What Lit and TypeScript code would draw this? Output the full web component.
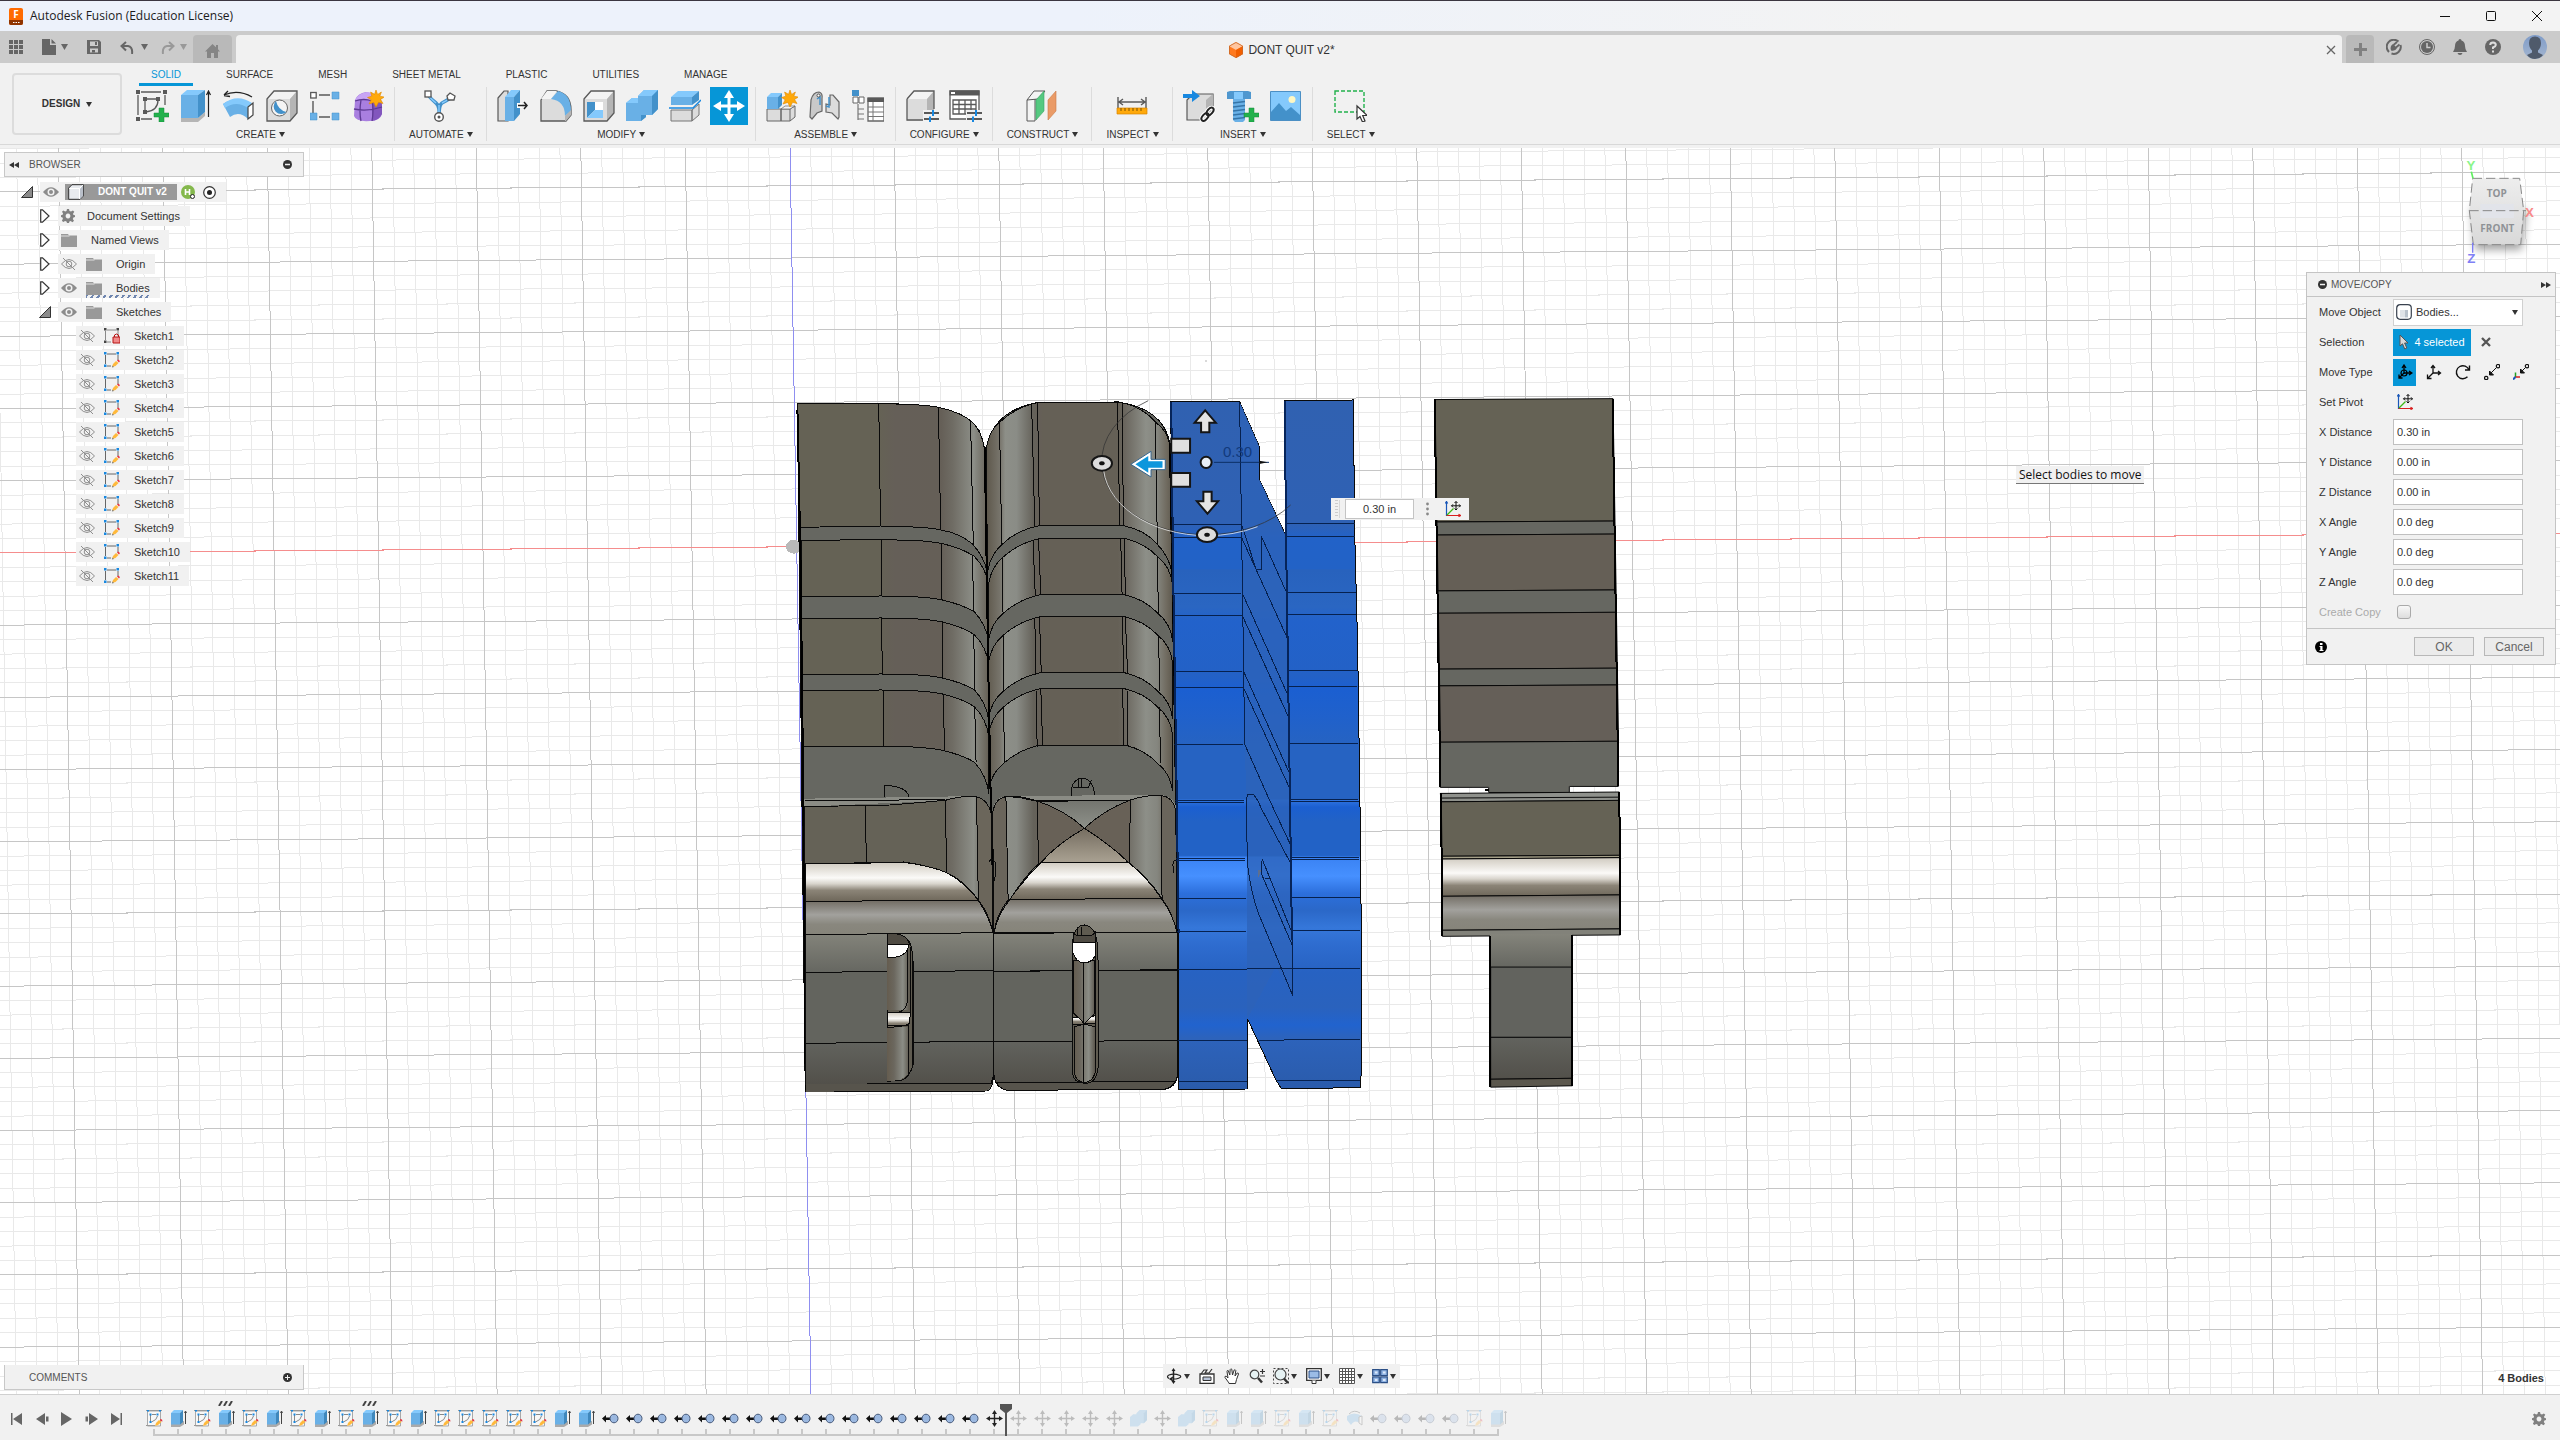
import { LitElement, html, svg, css, nothing, TemplateResult, SVGTemplateResult } from "lit";
import { customElement } from "lit/decorators.js";

type Art = [string, SVGTemplateResult];

const cubeGrey = svg`<path d="M1 9L8 1H31V23L23 31H1Z" fill="#dcdcdc"/><path d="M1 9L8 1H31L24 9Z" fill="#f3f3f3"/><path d="M31 1V23L24 31V9Z" fill="#b5b5b5"/><path d="M1 9L8 1H31V23L24 31H1Z" fill="none" stroke="#595959" stroke-width="1.3"/>`;
const plus = svg`<path d="M23 18h5v5h5v4h-5v5h-5v-5h-5v-4h5z" fill="#22b14c" stroke="#178a38" stroke-width=".5"/>`;
const spark = svg`<path d="M24 0l1.600 4.400L29.400 2l-1.600 4.200L32.500 7l-4 2.400 2.500 4.100-4.400-1.200L24 17l-2.200-4.600L17 14l2.200-4.300L15.500 7.500l4.300-1.300L18.600 2l3.900 2.300z" fill="#ffa90a" stroke="#e08a00" stroke-width=".6"/>`;
const sliders = svg`<path d="M18 23h15M18 29h15" stroke="#595959" stroke-width="2"/><path d="M27 20v6M24 26.500v5.500" stroke="#1888e0" stroke-width="2"/>`;

const ICONS: Record<string, Art> = {
  sketch: ["0 0 33 32", svg`<path d="M5 2h20M2 5v20M29 5v10M5 29h11" stroke="#595959" stroke-width="1.300" fill="none"/><path d="M0 0h4v4H0zM27 0h4v4h-4zM0 27h4v4H0zM7 7h4v4H7zM20 7h4v4h-4zM7 20h4v4H7z" fill="#595959"/><path d="M9 9h12M9 9v12M22 10c0 7-4 11-12 12" fill="none" stroke="#595959" stroke-width="1.300"/>${plus}`],
  extrude: ["0 0 32 32", svg`<path d="M1 28L1 32H18L25 26V22L18 28Z" fill="#b5b5b5"/><path d="M1 5H18V28H1Z" fill="#69b0e6"/><path d="M1 5L7 0H25L18 5Z" fill="#84c9fc"/><path d="M18 5L25 0V22L18 28Z" fill="#4391ca"/><path d="M28.500 27V2M26.500 5L28.500 1l2 4" stroke="#222" stroke-width="1.200" fill="none"/>`],
  revolve: ["0 0 33 32", svg`<path d="M1 14L8 27Q17 20 26 29V16Q15 4 1 14Z" fill="#69b0e6"/><path d="M1 14Q15 3 30 13L26 18Q14 10 3 18Z" fill="#84c9fc"/><path d="M26 17L31 13V25L26 29Z" fill="#fff" stroke="#444" stroke-width="1.200"/><path d="M2 5Q16-1 30 7M2 5l4-4M2 5.500l6 1" fill="none" stroke="#222" stroke-width="1.300"/>`],
  hole: ["0 0 32 32", svg`${cubeGrey}<circle cx="13.500" cy="18" r="8" fill="#f4f4f4" stroke="#666"/><path d="M10 11A7.500 7.500 0 1 0 20.500 22Q12 20 10 11Z" fill="#4391ca"/>`],
  patternPts: ["0 0 30 32", svg`<path d="M9 5h11M3 11v13M9 27h11" stroke="#595959" stroke-width="1.400"/><rect x=".7" y="2.500" width="5.500" height="5.500" fill="#fff" stroke="#595959" stroke-width="1.300"/><path d="M22 2h7v7h-7zM0 23h7v7H0zM22 23h7v7h-7z" fill="#69b0e6" stroke="#4391ca" stroke-width=".5"/>`],
  form: ["0 0 32 32", svg`<path d="M3 10Q6 3 14 2Q29 4 30 14V24Q28 31 18 31Q4 32 2 26Z" fill="#a97fe0"/><path d="M3 10Q7 3 15 2Q22 3 25 6L20 11Q10 8 3 10Z" fill="#c8a5f5"/><path d="M20 11L26 6Q30 10 30 16V24Q27 30 20 31Z" fill="#8256bd"/><path d="M9 10Q7 22 9 31M20 11Q22 20 20 31M2 19Q15 22 30 17M3 11Q12 8 20 11" stroke="#5e3a94" fill="none" stroke-width="1.300"/>${spark}`],
  automate: ["0 0 32 32", svg`<path d="M3 4Q8 10 12 13Q16 16 15 27M28 7Q22 11 18 13Q15 15 15 26" stroke="#4391ca" stroke-width="3.500" fill="none"/><path d="M3 4Q8 10 12 13M28 7Q22 11 18 13M15 15V25" stroke="#84c9fc" stroke-width="1.500" fill="none"/><rect x="1" y="1" width="6" height="6" fill="#fff" stroke="#555" stroke-width="1.300"/><path d="M26 3l5 3-1 4-6 0-1-4z" fill="#fff" stroke="#555" stroke-width="1.300"/><circle cx="15" cy="27" r="4.300" fill="#fff" stroke="#555" stroke-width="1.400"/><circle cx="15" cy="27" r="1.500" fill="#555"/>`],
  pressPull: ["0 0 32 32", svg`<path d="M1 8L7 1H11V31H1Z" fill="#dcdcdc" stroke="#595959" stroke-width="1.200"/><path d="M8 7H17V31H8Z" fill="#69b0e6"/><path d="M8 7L14 0H23L17 7Z" fill="#84c9fc"/><path d="M17 7L23 0V24L17 31Z" fill="#4391ca"/><rect x="20" y="13" width="5" height="5" fill="#fff"/><path d="M21 15.500h8M27 12l3 3.500-3 3.500" fill="none" stroke="#222" stroke-width="1.500"/>`],
  fillet: ["0 0 32 32", svg`<path d="M1 10L7 1H16Q31 4 31 20V25L26 31H1Z" fill="#dcdcdc" stroke="#595959" stroke-width="1.300"/><path d="M1 9L7 1H17L11 9Z" fill="#f4f4f4"/><path d="M11 9L18 1Q31 4 31 21L25 26Q25 11 11 9Z" fill="#69b0e6"/><path d="M25 26L31 20V25L26 31H25Z" fill="#b5b5b5"/>`],
  shell: ["0 0 32 32", svg`${cubeGrey}<path d="M4 12H20V28H4Z" fill="#fff"/><path d="M4 12L12 12V20L4 28Z" fill="#4391ca"/><path d="M12 20H20V28H4Z" fill="#84c9fc"/>`],
  combine: ["0 0 32 32", svg`<path d="M0 13L6 8H12V6L18 0H32V19L26 25H20V27L15 31H0Z" fill="#69b0e6"/><path d="M12 6L18 0H32L26 6ZM0 13L6 8H12V13Z" fill="#84c9fc"/><path d="M26 6L32 0V19L26 25ZM15 25H20V27L15 31Z" fill="#4391ca"/>`],
  split: ["0 0 32 32", svg`<path d="M2 7H23V15H2Z" fill="#69b0e6"/><path d="M2 7L9 1H30L23 7Z" fill="#84c9fc"/><path d="M23 7L30 1V10L23 15Z" fill="#4391ca"/><path d="M2 20H23V31H2ZM23 20L30 14V25L23 31Z" fill="#dcdcdc" stroke="#777"/><path d="M0 18H24L32 10" fill="none" stroke="#1888e0" stroke-width="1.500"/>`],
  moveBig: ["0 0 32 32", svg`<path d="M16 0l5 8h-3.500v6.500H24V11l8 5-8 5v-3.500h-6.500V24H21l-5 8-5-8h3.500v-6.500H8V21l-8-5 8-5v3.500h6.500V8H11z" fill="#fff"/>`],
  component: ["0 0 32 32", svg`<path d="M1 19H15V31H1ZM15 19H24L29 16V27L24 31H15Z" fill="#dcdcdc" stroke="#666"/><path d="M15 19l4-3h10l-5 3z" fill="#f4f4f4" stroke="#666" stroke-width=".7"/><path d="M24 19V31" stroke="#666"/><path d="M1 7H12V19H1Z" fill="#69b0e6"/><path d="M1 7L5 3H16L12 7Z" fill="#84c9fc"/><path d="M12 7L16 3V15L12 19Z" fill="#4391ca"/>${spark}`],
  joint: ["0 0 32 32", svg`<path d="M2 10Q4 2 10 2Q14 3 13 9V21L8 23L3 29L1 27Z" fill="#c9c9c9" stroke="#666" stroke-width="1.200"/><path d="M30 12L24 5L21 5V15L17 14V22L23 23L29 29L30 27Z" fill="#dcdcdc" stroke="#666" stroke-width="1.200"/><path d="M8 9l3-2v8M20 7v10l-3-1" stroke="#4391ca" stroke-width="1.500" fill="none"/><circle cx="9.500" cy="5.500" r="1.500" fill="#fff" stroke="#555"/>`],
  bom: ["0 0 32 32", svg`<path d="M0 0h7v6H0z" fill="#4391ca"/><path d="M1 7h5v6H1zM7 7h5v6H7z" fill="#fff" stroke="#666"/><path d="M6 14v16M6 19h6M6 24h6M6 29h6" stroke="#777" stroke-width="1.200"/><path d="M16 8H32V31H16Z" fill="#fff" stroke="#666" stroke-width="1.300"/><path d="M15.500 8h17v4h-17z" fill="#595959"/><path d="M16 17H32M16 22H32M16 26.500H32M21 12V31" stroke="#777"/>`],
  configure: ["0 0 33 32", svg`<path d="M1 9L8 1H28V24L22 31H1Z" fill="#dcdcdc"/><path d="M1 9L8 1H28L21 9Z" fill="#f3f3f3"/><path d="M28 1V24L21 31V9Z" fill="#b5b5b5"/><path d="M1 9L8 1H28V19M1 9V30H19" fill="none" stroke="#595959" stroke-width="1.300"/><path d="M17 20h16v12H17z" fill="#f1f1f1"/>${sliders}`],
  configTable: ["0 0 33 32", svg`<path d="M1 1H30V29H1Z" fill="#fff" stroke="#595959" stroke-width="1.300"/><path d="M.5.500h30v5H.5z" fill="#595959"/><path d="M2 2h4v2H2z" fill="#fff"/><path d="M4 10H27V24H4ZM4 14.500H27M4 19H27M10 10V24M16 10V24M22 10V24" fill="none" stroke="#595959" stroke-width="1.300"/><path d="M17 20h16v12H17z" fill="#f1f1f1"/>${sliders}`],
  construct: ["0 0 32 32", svg`<path d="M1 10L8 1H19L11 30L1 31Z" fill="#dcdcdc"/><path d="M1 10L8 1H19L12 9ZM1 10V31H9V9" fill="#f4f4f4" stroke="#595959"/><path d="M10 10L18 1V21L10 30Z" fill="#55c980" stroke="#3ba564" stroke-width=".6"/><path d="M22 10L30 1V21L22 30Z" fill="#ea9b67" stroke="#c97a46" stroke-width=".6"/>`],
  measure: ["0 0 32 32", svg`<path d="M2 7v11M30 7v11M3 12h26M7 9l-4 3 4 3M25 9l4 3-4 3" fill="none" stroke="#595959" stroke-width="1.400"/><path d="M1 18H31V24H1Z" fill="#ffa90a" stroke="#d98500" stroke-width=".7"/><path d="M5 18v3M9 18v3M13 18v3M17 18v3M21 18v3M25 18v3" stroke="#7d5200"/>`],
  insertLink: ["0 0 33 32", svg`<path d="M4 10L10 4H30V23L23 30H4Z" fill="#dcdcdc" stroke="#595959" stroke-width="1.200"/><path d="M30 4V23L23 30V10Z" fill="#b5b5b5"/><path d="M0 4h9V0l8 6-8 6V8H0z" fill="#1888e0"/><g fill="none" stroke="#fff" stroke-width="4"><ellipse cx="27" cy="21.500" rx="4.500" ry="2.600" transform="rotate(-50 27 21.500)"/><ellipse cx="22" cy="27" rx="4.500" ry="2.600" transform="rotate(-50 22 27)"/></g><g fill="none" stroke="#222" stroke-width="2"><ellipse cx="27" cy="21.500" rx="4.500" ry="2.600" transform="rotate(-50 27 21.500)"/><ellipse cx="22" cy="27" rx="4.500" ry="2.600" transform="rotate(-50 22 27)"/></g>`],
  bolt: ["0 0 33 32", svg`<path d="M1 2L4 1H22L25 2V9H1Z" fill="#4f97cf"/><path d="M8 2h9v7H8z" fill="#84c9fc"/><path d="M7 9H19V30L17 32H9L7 30Z" fill="#69b0e6"/><path d="M7 13l12-1.500M7 17l12-1.500M7 21l12-1.500M7 25l12-1.500M7 29l12-1.500" stroke="#3575a8" stroke-width="1.300"/>${plus}`],
  image: ["0 0 31 32", svg`<path d="M.5 1.500h30v29H.5z" fill="#84c9fc" stroke="#4b8fc4"/><path d="M1 22L9 13L16 21L21 17L30 25V30H1Z" fill="#4391ca"/><circle cx="22" cy="9.500" r="3.500" fill="#fdf7c4"/>`],
  select: ["0 0 33 32", svg`<path d="M1 1H30V22H1Z" fill="none" stroke="#22b14c" stroke-width="1.400" stroke-dasharray="4 2"/><path d="M23 16V29L26 26.500L28.500 32L31 31L28.700 25.500L33 25.300Z" fill="#fff" stroke="#333" stroke-width="1.200"/>`],

  grid9: ["0 0 14 14", svg`<path d="M0 0h4v4H0zM5 0h4v4H5zM10 0h4v4h-4zM0 5h4v4H0zM5 5h4v4H5zM10 5h4v4h-4zM0 10h4v4H0zM5 10h4v4H5zM10 10h4v4h-4z" fill="#666"/>`],
  file: ["0 0 14 16", svg`<path d="M0 0H8V6H14V16H0ZM9.500 0L14 4.500H9.500Z" fill="#666"/>`],
  save: ["0 0 14 14", svg`<path d="M0 0H12L14 2V14H0ZM3 1.500V6H11V1.500ZM3 8.500V12.500H11V8.500Z" fill="#666" fill-rule="evenodd"/><path d="M8 2h2v3H8zM5 10h3v2.500H5z" fill="#666"/>`],
  undo: ["0 0 14 13", svg`<path d="M6 1L1.500 5L6 9.500M2 5H8Q13 6 12 13" fill="none" stroke="#666" stroke-width="2"/>`],
  redo: ["0 0 14 13", svg`<path d="M8 1L12.500 5L8 9.500M12 5H6Q1 6 2 13" fill="none" stroke="#999" stroke-width="2"/>`],
  home: ["0 0 15 14", svg`<path d="M7.500 0L11 3.300V1H13V5.200L15 7.500H13V14H9V9H6V14H2V7.500H0Z" fill="#858585"/>`],
  caret: ["0 0 6 5", svg`<path d="M0 0H6L3 5Z" fill="#333"/>`],
  caretGrey: ["0 0 7 6", svg`<path d="M0 0H7L3.500 6Z" fill="#666"/>`],
  caretPale: ["0 0 7 6", svg`<path d="M0 0H7L3.500 6Z" fill="#999"/>`],
  appLogo: ["0 0 14 17", svg`<rect width="14" height="17" rx="2" fill="#ff6b00"/><path d="M0 12H14V15Q14 17 12 17H2Q0 17 0 15Z" fill="#8f3400"/><text x="7" y="10" font-size="10" font-weight="700" fill="#fff" text-anchor="middle">F</text><path d="M4 14.500h1.500M6.500 14.500h1.500M9 14.500h1.500" stroke="#fff" stroke-width="1.200"/>`],
  docCube: ["0 0 14 16", svg`<path d="M7 0L14 4V12L7 16L0 12V4Z" fill="#ff7a1f"/><path d="M7 0L14 4L7 8L0 4Z" fill="#ffc6a0"/><path d="M7 8L14 4V12L7 16Z" fill="#f25f00"/><path d="M7 .5L13.500 4V12L7 15.500L.5 12V4Z" fill="none" stroke="#c96a2a" stroke-width=".8"/>`],
  closeTab: ["0 0 10 10", svg`<path d="M1 1L9 9M9 1L1 9" stroke="#666" stroke-width="1.300"/>`],
  addTab: ["0 0 13 13", svg`<path d="M5 0h3v5h5v3H8v5H5V8H0V5h5z" fill="#808080"/>`],
  extensions: ["0 0 16 16", svg`<path d="M3 13A7 7 0 1 1 12.500 2.600M14.500 6A7 7 0 0 1 5.500 14.500" fill="none" stroke="#666" stroke-width="2"/><path d="M5 11.500Q3.500 7 7 5L11 9Q9.500 12.500 5 11.500Z" fill="#666"/><path d="M7.500 6L11 3M10 8.500L13.500 5.500" stroke="#666" stroke-width="1.800"/>`],
  clock: ["0 0 16 16", svg`<circle cx="8" cy="8" r="7.500" fill="none" stroke="#666"/><circle cx="8" cy="8" r="6" fill="#666"/><path d="M8 4V8.500H11.500" fill="none" stroke="#ccc" stroke-width="1.500"/>`],
  bell: ["0 0 14 16", svg`<path d="M7 0Q8.500 0 8.500 1.500Q12 2.500 12 7Q12 10 14 13H0Q2 10 2 7Q2 2.500 5.500 1.500Q5.500 0 7 0ZM4.500 14H9.500Q9 16 7 16Q5 16 4.500 14Z" fill="#666"/>`],
  help: ["0 0 16 16", svg`<circle cx="8" cy="8" r="8" fill="#666"/><path d="M5.200 6Q5.300 3.500 8 3.500Q10.800 3.600 10.800 6Q10.700 7.500 8 8.500V10" fill="none" stroke="#ddd" stroke-width="2"/><path d="M7 11.500h2v2H7z" fill="#ddd"/>`],
  avatar: ["0 0 24 24", svg`<defs><linearGradient id="sky" x2="0" y2="1"><stop offset="0" stop-color="#7f9cc9"/><stop offset="1" stop-color="#a3b5cf"/></linearGradient></defs><circle cx="12" cy="12" r="12" fill="url(#sky)"/><path d="M12 1.500Q18 1.500 18 8Q18 13 15 15.500V17.500L20 20Q17 24 12 24Q7 24 4 20L9 17.500V15.500Q6 13 6 8Q6 1.500 12 1.500Z" fill="#4f5a6b"/>`],
  winMin: ["0 0 10 10", svg`<path d="M0 5.500H10" stroke="#111"/>`],
  winMax: ["0 0 10 10", svg`<rect x=".5" y=".5" width="9" height="9" rx="1" fill="none" stroke="#111"/>`],
  winClose: ["0 0 10 10", svg`<path d="M0 0L10 10M10 0L0 10" stroke="#111"/>`],

  rewind: ["0 0 10 6", svg`<path d="M5 0V6L0 3ZM10 0V6L5 3Z" fill="#333"/>`],
  forward: ["0 0 10 6", svg`<path d="M0 0V6L5 3ZM5 0V6L10 3Z" fill="#333"/>`],
  minus: ["0 0 9 9", svg`<circle cx="4.500" cy="4.500" r="4.500" fill="#333"/><path d="M2 4.500H7" stroke="#f1f1f1" stroke-width="1.500"/>`],
  plusDot: ["0 0 9 9", svg`<circle cx="4.500" cy="4.500" r="4.500" fill="#333"/><path d="M2 4.500H7M4.500 2V7" stroke="#f1f1f1"/>`],
  info: ["0 0 12 12", svg`<circle cx="6" cy="6" r="6" fill="#000"/><path d="M5 2h2.500v2H5zM4.500 5H7.500V9H8.500V10H4.500V9H5.300V6H4.500Z" fill="#fff"/>`],
  open: ["0 0 12 12", svg`<path d="M11.500.5V11.500H.5Z" fill="#8b8b8b" stroke="#333"/>`],
  closed: ["0 0 10 14", svg`<path d="M.7.800H2.500L9 7L2.500 13.200H.7Z" fill="#fdfdfd" stroke="#333" stroke-width="1.200"/>`],
  eye: ["0 0 16 10", svg`<path d="M0 5Q8-4.500 16 5Q8 14.500 0 5Z" fill="#8c8c8c"/><circle cx="8" cy="5" r="3.500" fill="#f1f1f1"/><circle cx="8" cy="5" r="2" fill="#8c8c8c"/>`],
  eyeOff: ["0 0 16 12", svg`<path d="M.5 6Q8-3 15.500 6Q8 15 .5 6Z" fill="none" stroke="#8f8f8f"/><circle cx="8" cy="6" r="2.800" fill="none" stroke="#8f8f8f"/><path d="M2 0L14 12" stroke="#8f8f8f"/>`],
  folder: ["0 0 16 14", svg`<path d="M0 1H7L8 2.500H16V14H0Z" fill="#999"/><path d="M0 3H8.500" stroke="#f1f1f1" stroke-width=".8"/>`],
  gear: ["0 0 14 14", svg`<path d="M6 0h2l.5 2 1.500.6 1.900-1.200 1.400 1.400L12 4.700l.5 1.300 1.500.3v1.800l-1.600.5-.6 1.300 1.200 1.900-1.500 1.400-1.900-1.200-1.200.5L8 14H6l-.5-1.600-1.400-.5-1.900 1.200-1.300-1.400 1-1.900L1.500 8.500 0 8V6.200l1.600-.4.500-1.300L1 2.800 2.300 1.400l1.900 1.200L5.500 2zM7 4.600a2.400 2.400 0 1 0 .01 0z" fill="#808080" fill-rule="evenodd"/>`],
  docBody: ["0 0 16 16", svg`<path d="M.7 4L4 .7H15.300V12L12 15.300H.7Z" fill="#e8ebef" stroke="#333"/><path d="M1 4.500H11.500V15M11.500 4.500L15 1" fill="none" stroke="#fff"/><path d="M12 5L15 1.500V12L12 15Z" fill="#b9bfc9"/>`],
  radio: ["0 0 13 13", svg`<circle cx="6.500" cy="6.500" r="5.800" fill="#fff" stroke="#333" stroke-width="1.200"/><circle cx="6.500" cy="6.500" r="2.500" fill="#222"/>`],
  badge: ["0 0 14 14", svg`<circle cx="7" cy="7" r="7" fill="#84b84c"/><path d="M4.500 4V10M8.500 4V10M4.500 7H8.500" stroke="#fff" stroke-width="1.600"/><circle cx="11.500" cy="11.500" r="2" fill="#fff" stroke="#222"/>`],
  skLock: ["0 0 16 16", svg`<path d="M3 2H12M1.500 3V12M14 3V8M3 14H7" stroke="#888" fill="none"/><path d="M0 0h2.500v2.500H0zM12.500 0H15v2.500h-2.500zM0 12.500h2.500V15H0z" fill="#444"/><path d="M9 9h7v6H9z" fill="#f08a8a" stroke="#b81414"/><path d="M10.500 9V7Q12.500 5 14.500 7V9" fill="none" stroke="#b81414"/>`],
  sk: ["0 0 16 16", svg`<path d="M3 2H12M1.500 3V12M14 3V8M3 14H7" stroke="#666" fill="none"/><path d="M0 0h2.500v2.500H0zM12.500 0H15v2.500h-2.500zM0 12.500h2.500V15H0z" fill="#1888e0"/><path d="M8 15l1-3 3-3 2.500 2-3 3z" fill="#ffb93c"/><path d="M8 15.500l.5-2 1.500 1.500z" fill="#777"/><path d="M13 8.500l1-1 2 1.500-1 1.500z" fill="#e8303c"/>`],

  tlSketch: ["0 0 17 17", svg`<path d="M1.500 1H14.500V16H1.500Z" fill="#f7f7f7" stroke="#a9a9a9"/><path d="M0 .5h16M0 15.500h9" stroke="#999"/><path d="M4.500 4.500V11M6 4.500H10M11.500 6Q11 10 5.500 12" stroke="#888" fill="none"/><path d="M3.500 3.500h2v2h-2zM10.500 3.500h2v2h-2zM3.500 11h2v2h-2zM1 0h2v1.500H1zM13 0h2v1.500h-2z" fill="#1888e0"/><path d="M9 16l1-3 3-3 2.500 2-3.500 3z" fill="#ffb93c"/><path d="M14 9l2 .5.500 2L14.500 11z" fill="#e8303c"/>`],
  tlExtrude: ["0 0 17 17", svg`<path d="M1 14V17H10L14 14.500V11Z" fill="#aaa"/><path d="M1 3H10V14.500H1Z" fill="#69b0e6"/><path d="M1 3L4 0H13L10 3Z" fill="#84c9fc"/><path d="M10 3L13 0V12L10 14.500Z" fill="#3f88bd"/><path d="M15.500 14V2M14.500 3l1-2 1 2" fill="none" stroke="#444"/>`],
  tlPress: ["0 0 17 17", svg`<path d="M0 8.500L4 5V7.500H9V10H4V12.500Z" fill="#111"/><ellipse cx="12" cy="8.500" rx="4" ry="4.300" fill="#9bb8e0" stroke="#46597a"/>`],
  tlMove: ["0 0 17 17", svg`<path d="M8.500 0L11 4H9.200V7.800H13V6L17 8.500L13 11V9.200H9.200V13H11L8.500 17L6 13H7.800V9.200H4V11L0 8.500L4 6V7.800H7.800V4H6Z" fill="#222"/>`],
  tlCombine: ["0 0 32 32", svg`<path d="M0 13L6 8H12V6L18 0H32V19L26 25H20V27L15 31H0Z" fill="#69b0e6"/><path d="M26 6L32 0V19L26 25Z" fill="#4391ca"/>`],
  tlRevolve: ["0 0 17 17", svg`<path d="M1 6Q8 1 16 6V15L12 12Q8 10 5 15L1 10Z" fill="#69b0e6"/><path d="M3 4Q8-1 14 3" fill="none" stroke="#444"/><path d="M13 7l3-1v9l-3-2z" fill="#fff" stroke="#555"/>`],
  toStart: ["0 0 12 12", svg`<path d="M0 0H1.500V12H0ZM11 0V12L2 6Z" fill="#666"/>`],
  stepBack: ["0 0 13 12", svg`<path d="M9 0V12L0 6ZM10 3.500H12.500V8.500H10Z" fill="#666"/>`],
  play: ["0 0 11 14", svg`<path d="M0 0L11 7L0 14Z" fill="#666"/>`],
  stepFwd: ["0 0 13 12", svg`<path d="M4 0V12L13 6ZM.5 3.500H3V8.500H.5Z" fill="#666"/>`],
  toEnd: ["0 0 12 12", svg`<path d="M10.500 0H12V12H10.500ZM1 0V12L10 6Z" fill="#666"/>`],

  orbit: ["0 0 16 16", svg`<path d="M7.500 0L9.500 3H5.500ZM7.500 16L9.500 13H5.500Z" fill="#222"/><path d="M7.500 2V14" stroke="#222" stroke-width="1.500"/><path d="M3 10.500Q0 8.500 3 7Q8 5 14 7.500Q16.500 9.500 10 11H5M7 9l-3 2 3 2" fill="none" stroke="#222" stroke-width="1.200"/>`],
  lookAt: ["0 0 16 16", svg`<path d="M1 6H15V15.500H1Z" fill="#fff" stroke="#333" stroke-width="1.300"/><path d="M4 9H12V12.500H4Z" fill="#b9c4d8" stroke="#333"/><path d="M2 6L5 2H8L6 5H10L13 1" fill="none" stroke="#333" stroke-width="1.200"/>`],
  pan: ["0 0 16 16", svg`<path d="M5 15L1 9.500Q.5 8 2.200 8.200L4 10L3 3.500Q3 2.300 4.200 2.500L5.800 7L6.200 1.500Q6.700.300 7.800 1.300L8.500 7L10.200 2Q11.300 1.300 11.800 2.500L11 8L13.200 5Q14.500 4.700 14.500 6L12.500 11.500L11.500 15.500H5Z" fill="#fff" stroke="#333"/>`],
  zoomIcon: ["0 0 16 16", svg`<circle cx="5.500" cy="6.500" r="4.300" fill="#e6f2f3" stroke="#444" stroke-width="1.200"/><path d="M9 10L13 14.500" stroke="#333" stroke-width="2.500"/><path d="M11 3.500H16M13.500 1V6M11 8H16" stroke="#333" stroke-width="1.200"/>`],
  fitIcon: ["0 0 16 16", svg`<path d="M.5.500H15.500V15.500H.5Z" fill="none" stroke="#444" stroke-dasharray="2 2"/><circle cx="7.500" cy="6.500" r="5.500" fill="#e6f2f3" stroke="#444" stroke-width="1.200"/><path d="M11 10.500L15 15" stroke="#333" stroke-width="2.500"/>`],
  display: ["0 0 16 16", svg`<path d="M.7.700H15.300V12.300H.7Z" fill="#fff" stroke="#333" stroke-width="1.300"/><path d="M3 3H13V10H3Z" fill="#9bbce6" stroke="#2b4f86"/><path d="M6 12.500V15.500H10V12.500" fill="#fff" stroke="#333"/>`],
  gridIcon: ["0 0 16 16", svg`<path d="M.5.500H15.500V15.500H.5ZM.5 3.500H15.500M.5 6.500H15.500M.5 9.500H15.500M.5 12.500H15.500M3.500.500V15.500M6.500.500V15.500M9.500.500V15.500M12.500.500V15.500" fill="#fff" stroke="#555"/>`],
  views: ["0 0 16 16", svg`<path d="M.7 1.700H7.300V7.500H.7ZM8.700 1.700H15.300V7.500H8.700ZM.7 8.900H7.300V14.700H.7ZM8.700 8.900H15.300V14.700H8.700Z" fill="#8fb3e3" stroke="#2b4f86" stroke-width="1.200"/><path d="M3 3.500h2.500v2H3zM11 3.500h2.500v2H11zM3 11h2.500v2H3zM11 11h2.500v2H11z" fill="#dbe8fa"/>`],

  freeMove: ["0 0 16 16", svg`<path d="M7 9V2M7 9H14M7 9L2 14M5 4L7 1L9 4M12 7L15 9L12 11M2 10.500V14H5.500" fill="none" stroke="#000" stroke-width="1.300"/><circle cx="7" cy="9" r="3" fill="none" stroke="#000" stroke-width="1.200"/>`],
  translate: ["0 0 16 16", svg`<path d="M7 9V2M7 9H14M7 9L2 14M5 4L7 1.500L9 4M12 7L14.500 9L12 11M1.500 10.500V14.500H5.500" fill="none" stroke="#111" stroke-width="1.300"/>`],
  rotate: ["0 0 16 16", svg`<path d="M14 6A6.500 6.500 0 1 0 12.500 12.800M14.500 1.500V6H10" fill="none" stroke="#111" stroke-width="1.400"/>`],
  pointPoint: ["0 0 16 16", svg`<circle cx="14" cy="2.200" r="1.700" fill="none" stroke="#111" stroke-width="1.200"/><circle cx="2.200" cy="14" r="1.700" fill="none" stroke="#111" stroke-width="1.200"/><path d="M12 4L7 9M5.500 7V11H9.500Z" fill="#111" stroke="#111"/>`],
  pointPos: ["0 0 16 16", svg`<circle cx="14" cy="2.200" r="1.700" fill="none" stroke="#111" stroke-width="1.200"/><path d="M12 4L9 7M7.500 5V9H11.500Z" fill="#111" stroke="#111"/><path d="M2.500 13V8.500" stroke="#22a022" stroke-width="1.500"/><path d="M2.500 13H7" stroke="#d81e1e" stroke-width="1.500"/><path d="M2.500 13L0 15.500" stroke="#1856b8" stroke-width="2"/>`],
  pivot: ["0 0 16 16", svg`<path d="M1.500 15V1M.3 2.500L1.500.500L2.700 2.500" fill="none" stroke="#1856b8" stroke-width="1.200"/><path d="M1.500 14.500H15M13.500 13.300L15.500 14.500L13.500 15.700" fill="none" stroke="#d81e1e" stroke-width="1.200"/><path d="M2 14L8.500 7.500" stroke="#3cb814" stroke-width="1.300"/><path d="M11 .5V9M6.500 4.800H15.500M9.500 2L11 .5L12.500 2M9.500 7.500L11 9L12.500 7.500M8 3.300L6.500 4.800L8 6.300M14 3.300L15.500 4.800L14 6.300" fill="none" stroke="#111"/>`],
  bodyCyl: ["0 0 16 16", svg`<rect x=".7" y=".7" width="14.600" height="14.600" rx="3.500" fill="#fff" stroke="#39424f" stroke-width="1.200"/><path d="M4 6H9V13.500H4Z" fill="#dfe3e8"/><path d="M9 6H12V13.500H9Z" fill="#b9c2cc"/>`],
  cursor: ["0 0 10 16", svg`<path d="M1 1V12L3.500 9.800L5.800 15L7.800 14L5.600 9H9Z" fill="#d8d8d8" stroke="#555"/>`],
  clear: ["0 0 10 10", svg`<path d="M1 1L9 9M9 1L1 9" stroke="#555" stroke-width="2.300"/>`],
  more: ["0 0 3 14", svg`<circle cx="1.500" cy="2" r="1.400" fill="#888"/><circle cx="1.500" cy="7" r="1.400" fill="#888"/><circle cx="1.500" cy="12" r="1.400" fill="#888"/>`],
};

function icon(name: string, cls = ""): TemplateResult {
  const [box, art] = ICONS[name];
  const [, , w, h] = box.split(" ");
  return html`<svg class=${"ico " + cls} width=${w} height=${h} viewBox=${box} aria-hidden="true">${art}</svg>`;
}

const base = css`
  * { box-sizing: border-box; }
  button, input, select { font: inherit; color: inherit; margin: 0; }
  button { border: 0; padding: 0; background: none; display: flex; align-items: center; justify-content: center; }
  .ico { display: block; flex: none; }
`;

/* ---------- title bar and document tabs ---------- */
@customElement("app-header")
export class AppHeader extends LitElement {
  static styles = [base, css`
    :host { display: block; }
    .title { display: flex; align-items: center; height: 31px; padding: 0 18px 0 9px; border-top: 1px solid #3b3640; background: linear-gradient(90deg, #edf2fb 0%, #edf2fb 42%, #f3f3f3 75%); color: #1b1b1b; font: 12px/16px "Open Sans", sans-serif; }
    .title .name { margin-left: 7px; flex: 1; }
    .win { display: flex; gap: 36px; }
    .tabs { display: flex; align-items: flex-end; height: 32px; background: #cbcbcb; }
    .quick { display: flex; align-items: center; height: 32px; width: 193px; padding-left: 9px; }
    .quick button { height: 20px; }
    .g5 { margin-left: 5px; } .g7 { margin-left: 7px; } .g19 { margin-left: 19px; } .g13 { margin-left: 13px; }
    .home, .add { background: #b9b9b9; height: 28px; border-radius: 4px 4px 0 0; }
    .home { width: 39px; }
    .home .ico { margin-top: 4px; }
    .doc { flex: 1; display: flex; align-items: center; height: 28px; margin: 0 4px; padding: 1px 6px 0 2px; background: #f1f1f1; border-radius: 4px 4px 0 0; font-size: 12px; color: #333; }
    .doc .label { flex: 1; display: flex; align-items: center; justify-content: center; gap: 5px; }
    .add { width: 28px; }
    .tools { display: flex; align-items: center; gap: 17px; height: 32px; padding: 0 13px 0 12px; }
    .tools button { min-width: 16px; }
    .tools .ava { margin-left: 5px; }
  `];
  render() {
    return html`
      <div class="title">${icon("appLogo")}<span class="name">Autodesk Fusion (Education License)</span>
        <div class="win">
          <button aria-label="Minimize">${icon("winMin")}</button>
          <button aria-label="Maximize">${icon("winMax")}</button>
          <button aria-label="Close">${icon("winClose")}</button>
        </div>
      </div>
      <div class="tabs">
        <div class="quick">
          <button aria-label="Data panel">${icon("grid9")}</button>
          <button class="g19" aria-label="File">${icon("file")}${icon("caretGrey", "g5")}</button>
          <button class="g19" aria-label="Save">${icon("save")}</button>
          <button class="g19" aria-label="Undo">${icon("undo")}${icon("caretGrey", "g7")}</button>
          <button class="g13" aria-label="Redo">${icon("redo")}${icon("caretPale", "g5")}</button>
        </div>
        <button class="home" aria-label="Home">${icon("home")}</button>
        <div class="doc"><span class="label">${icon("docCube")}<span>DONT QUIT v2*</span></span>
          <button aria-label="Close document">${icon("closeTab")}</button></div>
        <button class="add" aria-label="New design">${icon("addTab")}</button>
        <div class="tools">
          <button aria-label="Extensions">${icon("extensions")}</button>
          <button aria-label="Job status">${icon("clock")}</button>
          <button aria-label="Notifications">${icon("bell")}</button>
          <button aria-label="Help">${icon("help")}</button>
          <button class="ava" aria-label="Account">${icon("avatar")}</button>
        </div>
      </div>`;
  }
}

/* ---------- ribbon ---------- */
const RIBBON_TABS = ["SOLID", "SURFACE", "MESH", "SHEET METAL", "PLASTIC", "UTILITIES", "MANAGE"];
const RIBBON_GROUPS: [string, string[]][] = [
  ["CREATE", ["sketch", "extrude", "revolve", "hole", "patternPts", "form"]],
  ["AUTOMATE", ["automate"]],
  ["MODIFY", ["pressPull", "fillet", "shell", "combine", "split", "moveBig"]],
  ["ASSEMBLE", ["component", "joint", "bom"]],
  ["CONFIGURE", ["configure", "configTable"]],
  ["CONSTRUCT", ["construct"]],
  ["INSPECT", ["measure"]],
  ["INSERT", ["insertLink", "bolt", "image"]],
  ["SELECT", ["select"]],
];

@customElement("app-ribbon")
export class AppRibbon extends LitElement {
  static styles = [base, css`
    :host { display: flex; height: 85px; padding-bottom: 3px; background: #f1f1f1; color: #333; font-size: 10px; line-height: 12px; }
    .bar { flex: 1; display: flex; border-bottom: 1px solid #d8d8d8; }
    .ws { width: 110px; height: 62px; margin: 10px 4px 0 12px; border: 2px solid #dcdcdc; border-radius: 4px; font-weight: 700; gap: 6px; }
    .tabs { display: flex; gap: 21px; padding-left: 13px; height: 23px; }
    .tabs button { padding: 3px 12px 0; border-bottom: 3px solid transparent; font-size: 10px; }
    .tabs .on { color: #0696d7; border-color: #0696d7; }
    .groups { display: flex; padding-top: 1px; }
    .group { display: flex; flex-direction: column; align-items: center; padding: 0 5px; border-right: 1px solid #dcdcdc; height: 54px; }
    .group:last-child { border-right: 0; }
    .icons { display: flex; }
    .icons button { width: 43px; height: 38px; }
    .icons .on { width: 38px; margin: 0 2px 0 3px; background: #0696d7; }
    .label { display: flex; gap: 3px; padding: 3px 8px 0 9px; height: 22px; }
    .label .ico { margin-top: -1px; }
  `];
  render() {
    return html`<div class="bar">
      <button class="ws">DESIGN ${icon("caret")}</button>
      <div>
        <div class="tabs">${RIBBON_TABS.map((t, i) => html`<button class=${i ? "" : "on"}>${t}</button>`)}</div>
        <div class="groups">${RIBBON_GROUPS.map(([name, tools]) => html`
          <div class="group">
            <div class="icons">${tools.map(t => html`<button class=${t === "moveBig" ? "on" : ""} aria-label=${t}>${icon(t)}</button>`)}</div>
            <button class="label">${name} ${icon("caret")}</button>
          </div>`)}</div>
      </div></div>`;
  }
}

/* ---------- viewport drawing ---------- */
const ALONG = Array.from({ length: 260 }, (_, i) => i - 130);

/* Contour of a ring on the half-rounded letter, starting at its left side. */
const edgeA = (y: number, x = 46) => `${x},${y} L220,${y - 2} L290,${y} Q330,${y + 3} 354,${y + 10} Q397,${y + 24} 423,${y + 48} Q450,${y + 85} 455,${y + 140}`;
const backA = (y: number) => `455,${y + 140} Q450,${y + 85} 423,${y + 45} Q397,${y + 24} 354,${y + 10} Q330,${y + 3} 290,${y} L220,${y - 2} L46,${y}`;
/* Contour of a ring on the fully rounded letter. */
const edgeB = (y: number) => `454,${y + 138} Q460,${y + 85} 486,${y + 56} Q520,${y + 14} 567,${y} L750,${y} Q795,${y + 14} 823,${y + 56} Q850,${y + 85} 855,${y + 138}`;
const backB = (y: number) => `855,${y + 138} Q850,${y + 85} 823,${y + 56} Q795,${y + 14} 750,${y} L567,${y} Q520,${y + 14} 486,${y + 56} Q460,${y + 85} 454,${y + 138}`;
const BANDS: [number, number][] = [[481, 650], [716, 884], [932, 1101]];

const stops = (list: [number, string][]) => list.map(([o, c]) => svg`<stop offset=${o} stop-color=${c}/>`);

const defs = svg`<defs>
  <linearGradient id="ga" gradientUnits="userSpaceOnUse" x1="40" x2="460" y1="0" y2="0">${stops([[0, "#656255"], [.42, "#656255"], [.5, "#655f58"], [.74, "#655f57"], [.8, "#6f6c64"], [.91, "#8d8f88"], [.92, "#85867f"], [.97, "#6e6a60"], [1, "#5b554a"]])}</linearGradient>
  <linearGradient id="gb" gradientUnits="userSpaceOnUse" x1="450" x2="858" y1="0" y2="0">${stops([[0, "#5e584c"], [.07, "#77746b"], [.1, "#8d8f88"], [.16, "#8a8c86"], [.25, "#65625a"], [.29, "#655f57"], [.3, "#656056"], [.7, "#656056"], [.74, "#6b675f"], [.85, "#8d8f88"], [.91, "#85867f"], [.96, "#706b60"], [1, "#5b554a"]])}</linearGradient>
  <linearGradient id="shine" x2="0" y2="1">${stops([[0, "#cfcac0"], [.14, "#dfdbd3"], [.4, "#fbfaf8"], [.55, "#d8d4cc"], [.72, "#8b8477"], [1, "#6e675a"]])}</linearGradient>
  <linearGradient id="dull" x2="0" y2="1">${stops([[0, "#716c63"], [.42, "#a2a19d"], [.7, "#89877e"], [1, "#86847a"]])}</linearGradient>
  <linearGradient id="fade" x2="0" y2="1">${stops([[0, "#84847b"], [1, "#666761"]])}</linearGradient>
  <linearGradient id="foot" x2="0" y2="1">${stops([[0, "#62635e"], [1, "#52504a"]])}</linearGradient>
  <linearGradient id="cone" x2="0" y2="1">${stops([[0, "#73746e"], [1, "#8e918a"]])}</linearGradient>
  <linearGradient id="sand" x2="0" y2="1">${stops([[0, "#756d60"], [1, "#aaa293"]])}</linearGradient>
  <linearGradient id="slot" x2="1" y2="0">${stops([[0, "#655d50"], [.3, "#6b675e"], [.7, "#8b8d86"], [1, "#5b564c"]])}</linearGradient>
  <linearGradient id="blue" gradientUnits="userSpaceOnUse" x1="0" x2="0" y1="60" y2="2130">${stops([[0, "#3061b1"], [.178, "#2f61b4"], [.2, "#2262c8"], [.245, "#2262c6"], [.246, "#2862bd"], [.3, "#2a66c2"], [.32, "#2262cb"], [.4, "#2361c6"], [.42, "#1b5fd1"], [.46, "#2061cb"], [.5, "#2663c2"], [.578, "#2663c2"], [.58, "#2f74e0"], [.59, "#1b5fd1"], [.61, "#2262c6"], [.66, "#2262c6"], [.663, "#3a82f3"], [.69, "#4690ff"], [.715, "#2c6fdc"], [.74, "#2b68c8"], [.765, "#3577da"], [.79, "#2e6ccf"], [.83, "#2762c2"], [.88, "#2a62bd"], [.906, "#2163ce"], [.925, "#2d63bb"], [1, "#2a5bab"]])}</linearGradient>
</defs>`;

function gridLines() {
  const v = (major: boolean) => ALONG.filter(k => (k % 5 === 0) === major && k !== 0).map(k => {
    const x = 789.8 + k * 20.9;
    return `M${x.toFixed(1)} 148L${(x + 20.8).toFixed(1)} 1394`;
  }).join("");
  const h = (major: boolean) => ALONG.filter(k => (k % 5 === 0) === major && k !== 0 && k > -32 && k < 64).map(k => {
    const y = 553 + k * 14.44;
    return `M0 ${y.toFixed(1)}L2560 ${(y - 20).toFixed(1)}`;
  }).join("");
  return svg`<path class="minor" d=${v(false) + h(false)}/><path class="major" d=${v(true) + h(true)}/>
    <path d="M0 553L2560 533" stroke="#f58d8d"/><path d="M790 148L811 1394" stroke="#8f8ff0"/>`;
}

const lettersAB = svg`
  <ellipse cx="30" cy="500" rx="17" ry="21" fill="#b9b9b9"/>
  <path class="e" fill="#666761" d="M38,72 L215,70 L280,73 Q395,80 433,150 L445,200 L449,205 Q465,90 563,67 L735,66 Q835,85 849,190 L866,1660 V2085 Q862,2125 835,2128 L495,2131 Q470,2125 465,2085 Q464,2125 452,2133 L55,2136 Z"/>
  <path class="e" fill="url(#ga)" d="M38,72 L215,70 L290,74 Q330,77 345,82 Q395,97 418,125 Q440,155 445,205 L452,578 Q444,530 420,493 Q390,458 350,450 Q330,443 290,441 L219,438 L44,442 Z"/>
  ${BANDS.map(([t, b]) => svg`<path class="e" fill="url(#ga)" d=${`M${edgeA(t)} L${backA(b)} Z`}/>`)}
  <path class="e" fill="url(#gb)" d="M449,205 Q456,150 478,127 Q515,80 563,67 L738,66 Q790,80 818,127 Q842,150 848,190 L853,573 Q845,525 821,492 Q795,450 748,437 L566,437 Q515,450 483,494 Q458,525 452,575 Z"/>
  ${BANDS.map(([t, b]) => svg`<path class="e" fill="url(#gb)" d=${`M${edgeB(t - 6)} L${backB(b - 6)} Z`}/>`)}
  <path class="e" fill="none" d="M215,70 L219,438 M345,82 L350,450 M415,122 L421,494 M220,478 L221,648 M351,490 L352,659 M419,527 L422,696 M221,714 L223,882 M354,726 L355,893 M422,762 L424,928 M225,930 V1099 M356,942 L358,1111 M424,977 L427,1146
    M478,127 L483,494 M548,72 L555,442 M561,68 L565,437 M735,66 L740,438 M745,70 L748,437 M817,126 L822,494 M484,530 L485,697 M551,482 L556,648 M563,477 L568,644 M742,476 L745,644 M750,476 L752,644 M822,530 L824,700 M486,766 L487,932 M555,716 L557,884 M565,711 L569,878 M746,711 L748,878 M752,711 L757,880 M825,766 L826,934 M487,985 L489,1150 M558,932 L560,1100 M568,927 L572,1096 M746,927 L749,1096 M756,932 L758,1100 M826,982 L829,1150"/>
  <path class="thick" d="M38,90 L45,560 L50,1160 L53,1600 L56,2130 M446,200 L454,900 L459,1260 L464,1640 L464,2090 M849,190 L858,800 L864,1240 L867,1660 V2080"/>
  <path class="e" fill="none" d="M228,1250 V1216 Q275,1218 281,1250 M634,1250 V1228 Q640,1194 660,1195 Q682,1197 686,1250 M637,1222 H672 L678,1200 M650,1222 V1197 M657,1222 V1197"/>

  <path fill="#8b8c85" d="M53,1256 L360,1250 Q400,1246 430,1250 L455,1275 L360,1262 L53,1280 Z"/>
  <path class="e" fill="#656257" d="M54,1280 L240,1275 L360,1261 L363,1478 Q320,1455 270,1446 L54,1452 Z"/>
  <path class="e" fill="url(#ga)" d="M360,1261 Q400,1245 428,1250 L432,1560 Q400,1500 363,1478 Z"/>
  <path class="e" fill="#6b665b" d="M428,1250 Q452,1258 460,1300 L464,1658 Q455,1600 432,1560 Z"/>
  <path class="e" fill="url(#shine)" d="M56,1452 L200,1449 L270,1447 Q330,1458 363,1478 Q405,1510 432,1561 L56,1564 Z"/>
  <path class="e" fill="url(#dull)" d="M56,1564 L432,1561 Q455,1610 464,1658 L56,1664 Z"/>
  <path class="e" fill="url(#fade)" d="M56,1664 L464,1658 V1772 L56,1777 Z"/>
  <path class="e" fill="#63645e" d="M56,1777 L464,1772 V1984 L56,1990 Z"/>
  <path class="e" fill="url(#foot)" d="M56,1990 L464,1984 V2090 L460,2110 L56,2113 Z"/>
  <path fill="#57544c" d="M56,2113 L460,2111 Q456,2130 448,2132 L56,2135 Z"/>
  <path class="e" fill="none" d="M54,1262 L210,1261 L360,1258 M186,1279 L188,1448"/>

  <path fill="#8b8c85" d="M463,1290 Q470,1250 492,1249 L828,1244 Q860,1250 864,1290 Z"/>
  <path class="e" fill="#6a655b" d="M463,1300 Q468,1255 492,1250 L497,1560 Q472,1600 466,1660 Z M830,1246 Q856,1252 862,1290 L864,1658 Q855,1600 832,1556 Z"/>
  <path class="e" fill="url(#gb)" d="M492,1250 Q520,1245 560,1263 L563,1450 Q520,1510 497,1570 Z M763,1260 Q800,1244 830,1246 L832,1556 Q800,1490 758,1447 Z"/>
  <path class="e" fill="url(#cone)" d="M560,1263 L763,1260 Q705,1290 663,1345 Q620,1290 560,1263 Z"/>
  <path class="e" fill="#686157" d="M560,1263 Q620,1290 663,1345 Q605,1390 566,1450 H563 Z M763,1260 Q705,1290 663,1345 Q720,1395 758,1447 H761 Z"/>
  <path class="e" fill="url(#sand)" d="M663,1345 Q605,1390 568,1448 L758,1446 Q720,1395 663,1345 Z"/>
  <path class="e" fill="url(#shine)" d="M568,1448 L758,1446 Q805,1500 830,1555 L500,1559 Q530,1500 568,1448 Z"/>
  <path class="e" fill="url(#dull)" d="M500,1559 L830,1555 Q855,1600 865,1658 H466 Q472,1610 500,1559 Z"/>
  <path class="e" fill="url(#fade)" d="M466,1660 L866,1657 V1769 L466,1774 Z"/>
  <path class="e" fill="#63645e" d="M466,1774 L866,1770 V1981 L466,1986 Z"/>
  <path class="e" fill="url(#foot)" d="M466,1986 L866,1981 V2080 Q864,2100 860,2104 L472,2108 Q466,2100 466,2085 Z"/>
  <path class="e" fill="#57544c" d="M472,2108 L860,2104 Q852,2127 835,2128 L495,2131 Q478,2126 472,2108 Z"/>
  <path class="e" fill="none" d="M492,1250 L520,1252 L560,1264 L763,1261 M455,1445 Q462,1430 470,1450 Q470,1500 463,1510 M862,1440 Q852,1440 858,1480"/>

  <path class="e" fill="#5f5b50" d="M234,1661 H250 Q286,1665 288,1720 L291,1760 V2050 Q282,2095 265,2100 L234,2104 Z"/>
  <path fill="url(#slot)" d="M234,1692 H282 V1890 H234 Z M234,1940 H282 V2080 L262,2100 L234,2104 Z"/>
  <path class="e" fill="#4f4b43" d="M234,1661 H250 Q275,1662 282,1692 H234 Z"/>
  <path class="e" fill="#fff" d="M234,1692 H280 Q280,1725 250,1732 H234 Z"/>
  <path class="e" fill="url(#shine)" d="M234,1898 H284 L282,1930 Q270,1941 234,1942 Z"/>
  <path class="e" fill="none" d="M278,1710 V1860 Q276,1890 258,1897 M284,1700 V1900 M280,1930 V2085 M234,1937 H280 M288,1720 V2060"/>
  <path class="e" fill="#5f5b50" d="M637,2080 V1690 Q640,1636 663,1635 Q690,1640 691,1700 L693,1750 V2060 Q690,2110 665,2110 Q640,2110 637,2080 Z"/>
  <path class="e" fill="url(#slot)" d="M640,1740 H685 V1900 L663,1930 L640,1900 Z M641,1940 L663,1932 L686,1940 V2080 Q680,2106 663,2108 Q645,2106 641,2080 Z"/>
  <path class="e" fill="#4f4b43" d="M640,1661 L645,1665 H680 L688,1655 L688,1687 H638 Z"/>
  <path class="e" fill="#fff" d="M637,1687 H687 V1725 Q680,1748 662,1749 Q645,1748 637,1715 Z"/>
  <path class="e" fill="url(#shine)" d="M638,1912 L650,1912 L663,1932 L676,1912 L688,1905 V1930 L663,1932 L638,1932 Z"/>
  <path class="e" fill="none" d="M657,1640 V1664 M648,1645 V1664 M662,1749 V2108 M688,1700 V2080"/>`;

const LEFT_ROWS = [433, 472, 640, 707, 875, 924, 1093, 1261, 1268, 1436, 1443, 1555, 1655, 1768, 1981, 2104];
const blueBodies = svg`
  <path class="e" fill="url(#blue)" d="M851,65 H1001 L1044,200 V298 L1101,465 L1099,62 L1249,60 L1251,430 L1258,800 L1263,1260 L1266,1660 V2070 L1264,2123 L1092,2126 L1080,2100 L1018,1916 V2127 L868,2128 L867,1600 L860,1000 L853,430 Z"/>
  <path fill="#2d63b8" d="M1001,65 L1044,200 V298 L1101,465 L1105,800 L1110,1250 L1117,1848 L1080,1760 L1018,1916 V1440 L1010,925 L1005,433 Z" opacity=".75"/>
  <path class="eb" d=${LEFT_ROWS.map((y, i) => `M${853 + i},${y} L${Math.min(1017, 1003 + i)},${y - 1}`).join("") + LEFT_ROWS.slice(0, 15).map((y, i) => `M${Math.min(1116, 1102 + i)},${y - 3} L${Math.min(1264, 1252 + i)},${y - 4}`).join("")}/>
  <path class="eb" d="M1018,1767 L1117,1766 M1044,1981 L1264,1977 M1082,2103 L1264,2101
    M1001,65 L1005,433 L1008,707 L1012,1093 M1015,1266 L1018,1440 M1005,433 L1037,568 H1048 V468 L1103,637 M1005,472 L1105,775 M1007,640 L1106,945 M1007,707 L1107,1010 M1010,875 L1108,1175 M1010,925 L1110,1225 M1012,1093 L1066,1260 L1112,1395 M1018,1244 H1032 Q1042,1262 1048,1285 L1113,1452 M1015,1266 L1018,1244 M1017,1440 Q1025,1540 1042,1600 L1117,1848 L1114,1500 M1048,1480 L1050,1437 L1117,1665 M1056,1495 H1068 M1048,1480 L1117,1700"/>
  <path class="thickb" d="M852,65 L856,560 L864,1240 L868,1660 M1099,62 L1103,560 L1110,1200 L1115,1680"/>
  <path d="M1040,1470 h8 l-6,22z" fill="#5e6f8f"/>`;

const SECTIONS: [number, number, string][] = [
  [41, 304, "#656255"], [304, 332, "#666761"], [332, 452, "#655f56"], [452, 500, "#666761"],
  [500, 620, "#655f58"], [620, 656, "#666761"], [656, 777, "#655f58"],
];
const letterI = svg`
  ${SECTIONS.map(([a, b, c]) => svg`<path class="e" fill=${c} d=${`M${104 + a / 44},${a + 1} L${638 + a / 44},${a - 1} L${638 + b / 44},${b - 1} L${104 + b / 44},${b + 1} Z`}/>`)}
  <path class="e" fill="#666761" d="M121,778 L655,776 V873 H508 V886 H266 V875 H121 Z"/>
  <path class="e" fill="#8f918c" d="M121,888 L658,885 V903 L124,906 Z"/>
  <path class="e" fill="#656255" d="M124,906 L658,903 L660,1021 L126,1023 Z"/>
  <path class="e" fill="#a49f88" d="M126,1023 L661,1021 V1026 L126,1029 Z"/>
  <path class="e" fill="url(#shine)" d="M127,1029 L661,1026 V1106 L127,1109 Z"/>
  <path class="e" fill="url(#dull)" d="M127,1109 L661,1106 V1179 L127,1182 Z"/>
  <path class="e" fill="#82827a" d="M127,1182 L661,1179 V1192 L127,1195 Z"/>
  <path fill="url(#fade)" d="M270,1190 H517 V1261 H270 Z"/>
  <path class="e" fill="#62635e" d="M272,1261 H517 V1412 H272 Z"/>
  <path class="e" fill="url(#foot)" d="M272,1412 H517 V1500 L272,1502 Z"/>
  <path class="e" fill="#5b574d" d="M272,1502 L517,1500 V1516 L272,1519 Z"/>
  <path class="thick" d="M104,41 L121,875 M123,888 L127,1195 M638,40 L655,873 M658,886 L661,1192 M269,1195 V1519 M517,1192 V1516 M256,880 H266"/>
  <path class="e" fill="none" d="M123,898 L658,896"/>`;

const arrow = (x: number, y: number, up: boolean) => {
  const s = up ? 1 : -1;
  const p = (dx: number, dy: number) => `${x + dx},${y + dy * s}`;
  return svg`<path fill="#e4e4e4" stroke="#151515" stroke-width="2" d=${`M${p(0, -33)} L${p(23, 4)} L${p(9, 4)} L${p(9, 33)} L${p(-9, 33)} L${p(-9, 4)} L${p(-23, 4)} Z`}/>`;
};
const knob = (x: number, y: number) => svg`<circle cx=${x} cy=${y} r="22" fill="#dcdcdc" stroke="#151515" stroke-width="2"/><circle cx=${x} cy=${y} r="6" fill="#111"/>`;
const manipulator = svg`
  <path class="ring" stroke="#333" d="M802,62 A227,217 0 0 0 701,250 A227,217 0 0 0 930,464 A227,217 0 0 0 1112,375"/>
  <path class="ring" stroke="#f4f4f4" d="M704,250 A226,214 0 0 0 930,467 A227,217 0 0 0 1040,440"/>
  <path d="M945,247 H1065" stroke="#0c2f66"/><path d="M1044,242 L1062,247 L1044,252 Z" fill="#111"/>
  ${arrow(926, 124, true)}${arrow(931, 368, false)}
  <path fill="#e0e0e0" stroke="#151515" stroke-width="2" d="M852,176 H893 V218 H852 Z M852,279 H893 V320 H852 Z"/>
  <ellipse cx="928" cy="247" rx="12" ry="17" fill="#e8eef6" stroke="#151515" stroke-width="2"/>
  <path d="M764,253 L808,214 V238 H839 V269 H808 V291 Z" fill="#fff" stroke="#34648c"/>
  <path d="M774,253 L802,228 V244 H833 V263 H802 V278 Z" fill="#0d96dc"/>
  ${knob(701, 250)}${knob(930, 464)}`;

@customElement("app-scene")
export class AppScene extends LitElement {
  static styles = [base, css`
    :host { display: block; position: absolute; inset: 0; }
    .scene { display: block; width: 100%; height: 100%; background: #fff; }
    .grid, .solid { shape-rendering: crispEdges; }
    .minor { stroke: #e9e9e9; } .major { stroke: #c6c6c6; }
    .solid path, .tools path, .tools circle, .tools ellipse { vector-effect: non-scaling-stroke; }
    .e { stroke: #0a0a0a; } .thick { stroke: #000; stroke-width: 2px; fill: none; }
    .eb { stroke: #06214f; fill: none; } .thickb { stroke: #06245a; stroke-width: 2px; fill: none; }
    .ring { fill: none; stroke-width: 1px; opacity: .75; }
    .dim { font: 15px "Liberation Sans", Arial, sans-serif; fill: #123a7c; }
  `];
  render() {
    return html`<svg class="scene" viewBox="0 148 2560 1246" preserveAspectRatio="xMinYMin slice" role="img" aria-label="Model viewport">
      <g class="grid">${gridLines()}</g>
      ${defs}
      <svg class="solid" x="780" y="380" width="720" height="740" viewBox="0 0 1568 2220" preserveAspectRatio="none">${lettersAB}${blueBodies}</svg>
      <svg class="solid" x="1400" y="380" width="300" height="730" viewBox="0 0 900 1568" preserveAspectRatio="none">${letterI}</svg>
      <text class="dim" x="1223" y="457">0.30</text>
      <svg class="tools" x="780" y="380" width="720" height="740" viewBox="0 0 1568 2220" preserveAspectRatio="none">${manipulator}</svg>
      <circle cx="1206" cy="361" r="1" fill="#ccc"/>
    </svg>`;
  }
}

/* ---------- browser tree ---------- */
interface TreeRow { label: string; level: number; open?: boolean; eye?: "eye" | "eyeOff"; icon: string; cls?: string }
const TREE: TreeRow[] = [
  { label: "Document Settings", level: 1, open: false, icon: "gear", cls: "near" },
  { label: "Named Views", level: 1, open: false, icon: "folder" },
  { label: "Origin", level: 1, open: false, eye: "eyeOff", icon: "folder" },
  { label: "Bodies", level: 1, open: false, eye: "eye", icon: "folder", cls: "hatched" },
  { label: "Sketches", level: 1, open: true, eye: "eye", icon: "folder" },
  ...Array.from({ length: 11 }, (_, i): TreeRow => ({ label: `Sketch${i + 1}`, level: 2, eye: "eyeOff", icon: i ? "sk" : "skLock" })),
];

@customElement("app-browser")
export class AppBrowser extends LitElement {
  static styles = [base, css`
    :host { display: block; width: 300px; font-size: 11px; line-height: 20px; color: #333; }
    .head { display: flex; align-items: center; height: 25px; padding: 0 11px 0 4px; background: #f1f1f1; border: 1px solid #c8c8c8; color: #555; font-size: 10px; }
    .head .t { flex: 1; margin-left: 10px; }
    ul { list-style: none; margin: 3px 0 0; padding: 0; }
    li { display: flex; align-items: center; height: 24px; }
    .tw { width: 18px; display: flex; justify-content: center; margin-right: 4px; }
    .l0 { padding-left: 14px; } .l1 { padding-left: 32px; } .l2 { padding-left: 72px; }
    .cell { display: flex; align-items: center; height: 20px; padding: 0 10px 0 3px; background: #f1f1f1; }
    .eye { margin-right: 9px; }
    .cell .name { margin-left: 14px; }
    .near .cell .name { margin-left: 12px; }
    .root { display: flex; align-items: center; height: 16px; margin: 0 4px 0 -3px; padding: 0 10px 0 3px; background: #999; color: #fff; font-weight: 700; font-size: 10px; }
    .radio { margin-left: 8px; }
    .mark { display: flex; align-items: center; height: 20px; }
    .hatched .mark { background: repeating-linear-gradient(125deg, #6f86b0 0 2px, transparent 2px 5px) left bottom / 100% 3px no-repeat; }
  `];
  render() {
    return html`<div class="head">${icon("rewind")}<span class="t">BROWSER</span><button aria-label="Collapse">${icon("minus")}</button></div>
      <ul>
        <li class="l0"><span class="tw">${icon("open")}</span><span class="cell">${icon("eye", "eye")}<span class="root">${icon("docBody")}<span class="name">DONT QUIT v2</span></span>${icon("badge")}${icon("radio", "radio")}</span></li>
        ${TREE.map(n => html`<li class=${`l${n.level} ${n.cls ?? ""}`}>
          ${n.open === undefined ? nothing : html`<span class="tw">${icon(n.open ? "open" : "closed")}</span>`}
          <span class="cell">${n.eye ? icon(n.eye, "eye") : nothing}<span class="mark">${icon(n.icon)}<span class="name">${n.label}</span></span></span></li>`)}
      </ul>`;
  }
}

/* ---------- move / copy dialog ---------- */
const FIELDS = [["X Distance", "0.30 in"], ["Y Distance", "0.00 in"], ["Z Distance", "0.00 in"], ["X Angle", "0.0 deg"], ["Y Angle", "0.0 deg"], ["Z Angle", "0.0 deg"]];

@customElement("app-dialog")
export class AppDialog extends LitElement {
  static styles = [base, css`
    :host { display: block; width: 250px; background: #f1f1f1; border: 1px solid #c4c4c4; font-size: 11px; color: #333; }
    .head { display: flex; align-items: center; height: 24px; padding: 0 4px 0 11px; border-bottom: 1px solid #c4c4c4; font-size: 10px; color: #555; }
    .head .t { flex: 1; margin-left: 4px; }
    .row { display: grid; grid-template-columns: 74px 1fr; align-items: center; height: 30px; padding: 0 32px 0 12px; }
    .rows { padding: 0 0 1px; }
    .field { width: 100%; height: 26px; border: 1px solid #c0c0c0; background: #fff; padding: 0 3px; outline: 0; }
    .combo { display: grid; align-items: center; }
    .combo > * { grid-area: 1 / 1; }
    .combo select { appearance: none; width: 100%; height: 27px; border: 1px solid #d0d0d0; background: #fff; padding: 0 22px; border-radius: 0; }
    .combo .ico { z-index: 1; margin-left: 3px; }
    .combo .dn { justify-self: end; margin-right: 5px; }
    .sel { display: flex; align-items: center; gap: 10px; }
    .sel .pick { width: 78px; height: 27px; background: #0696d7; color: #fff; gap: 5px; }
    .types { display: flex; gap: 6px; margin-right: -20px; }
    .types button { width: 23px; height: 27px; }
    .types .on { background: #0696d7; }
    .pivot { width: 23px; height: 27px; }
    .off { color: #aaa; }
    input[type="checkbox"] { appearance: none; width: 14px; height: 14px; margin-left: 4px; border: 1px solid #aaa; border-radius: 3px; background: linear-gradient(#f8f8f8, #ddd); }
    .foot { display: flex; align-items: center; gap: 10px; height: 36px; padding: 0 11px 0 8px; border-top: 1px solid #c4c4c4; }
    .foot .info { margin-right: auto; }
    .foot .btn { width: 60px; height: 19px; border: 1px solid #b8b8b8; background: #ebebeb; color: #666; font-size: 12px; }
  `];
  render() {
    return html`<div class="head">${icon("minus")}<span class="t">MOVE/COPY</span><button aria-label="Dock">${icon("forward")}</button></div>
      <div class="rows">
        <div class="row"><label for="obj">Move Object</label><span class="combo"><select id="obj"><option>Bodies...</option></select>${icon("bodyCyl")}${icon("caret", "dn")}</span></div>
        <div class="row"><span>Selection</span><span class="sel"><button class="pick">${icon("cursor")}4 selected</button><button aria-label="Clear selection">${icon("clear")}</button></span></div>
        <div class="row"><span>Move Type</span><span class="types">${["freeMove", "translate", "rotate", "pointPoint", "pointPos"].map((t, i) => html`<button class=${i ? "" : "on"} aria-label=${t}>${icon(t)}</button>`)}</span></div>
        <div class="row"><span>Set Pivot</span><button class="pivot" aria-label="Set Pivot">${icon("pivot")}</button></div>
        ${FIELDS.map(([l, v], i) => html`<div class="row"><label for=${"f" + i}>${l}</label><input class="field" id=${"f" + i} type="text" .value=${v}></div>`)}
        <div class="row off"><label for="copy">Create Copy</label><input id="copy" type="checkbox" disabled></div>
      </div>
      <div class="foot"><button class="info" aria-label="Info">${icon("info")}</button><button class="btn">OK</button><button class="btn">Cancel</button></div>`;
  }
}

/* ---------- timeline ---------- */
const rep = (n: string, k: number) => Array<string>(k).fill(n);
const DONE = ["s", "e", "s", "e*", "s", "e", "s", "e", "s", "e*", "s", "e", ...rep("s", 5), "e", "e", ...rep("p", 16), "m"];
const AHEAD = [...rep("m", 5), "c", "m", "c", "s", "e", "e", "s", "e", "s", "r", ...rep("p", 4), "s", "e"];
const TL: Record<string, string> = { s: "tlSketch", e: "tlExtrude", p: "tlPress", m: "tlMove", c: "tlCombine", r: "tlRevolve" };

@customElement("app-timeline")
export class AppTimeline extends LitElement {
  static styles = [base, css`
    :host { display: flex; height: 46px; background: #f1f1f1; border-top: 1px solid #d0d0d0; padding-right: 14px; }
    .play { display: flex; align-items: center; justify-content: space-between; width: 111px; margin: 3px 20px 0 11px; }
    .track { display: flex; }
    .step { position: relative; display: flex; flex-direction: column; align-items: center; width: 24px; padding-top: 15px; }
    .step .ico { width: 17px; height: 17px; }
    .step .tick { width: 2px; height: 5px; margin-top: 2px; background: #c8c8c8; }
    .step .rail { width: 24px; height: 2px; background: #c8c8c8; }
    .step.first .rail, .step.last .rail { width: 13px; }
    .step.first .rail { align-self: flex-end; } .step.last .rail { align-self: flex-start; }
    .ahead .ico { opacity: .25; }
    .hatch { position: absolute; top: 6px; left: 4px; }
    .head { position: absolute; top: 9px; right: -6px; z-index: 1; }
    .set { margin-left: auto; padding-top: 3px; }
  `];
  render() {
    const all = [...DONE, ...AHEAD];
    return html`<div class="play">${["toStart", "stepBack", "play", "stepFwd", "toEnd"].map(n => html`<button aria-label=${n}>${icon(n)}</button>`)}</div>
      <div class="track">${all.map((k, i) => html`<div class=${`step${i >= DONE.length ? " ahead" : ""}${i === 0 ? " first" : ""}${i === all.length - 1 ? " last" : ""}`}>
        ${k.endsWith("*") ? html`<svg class="hatch" width="16" height="5" viewBox="0 0 16 5"><path d="M1 5L4 0M6 5L9 0M11 5L14 0" stroke="#444" stroke-width="2"/></svg>` : nothing}
        ${icon(TL[k[0]])}<span class="tick"></span><span class="rail"></span>
        ${i === DONE.length - 1 ? html`<svg class="head" width="12" height="32" viewBox="0 0 12 32"><path d="M0 0H12V5L7 9V32H5V9L0 5Z" fill="#555"/></svg>` : nothing}
      </div>`)}</div>
      <button class="set" aria-label="Settings">${icon("gear")}</button>`;
  }
}

/* ---------- shell ---------- */
const NAV: [string, boolean][] = [["orbit", true], ["lookAt", false], ["pan", false], ["zoomIcon", false], ["fitIcon", true], ["display", true], ["gridIcon", true], ["views", true]];

@customElement("app-root")
export class AppRoot extends LitElement {
  static styles = [base, css`
    :host { display: flex; flex-direction: column; height: 100vh; overflow: hidden; background: #f1f1f1; font-family: "Liberation Sans", Arial, sans-serif; color: #333; }
    .stage { position: relative; flex: 1; min-height: 0; overflow: hidden; }
    app-browser { position: absolute; left: 4px; top: 4px; }
    app-dialog { position: absolute; right: 4px; top: 124px; }
    .comments { position: absolute; left: 4px; bottom: 4px; width: 300px; height: 25px; display: flex; align-items: center; padding: 0 11px 0 24px; background: #f1f1f1; border: 1px solid #c8c8c8; border-top: 0; font-size: 10px; color: #555; }
    .comments span { flex: 1; }
    .nav { position: absolute; left: 50%; bottom: 6px; margin-left: -117px; width: 237px; height: 24px; display: flex; align-items: center; justify-content: space-between; padding: 0 4px 0 3px; background: #f1f1f1; }
    .nav button { gap: 2px; }
    .count { position: absolute; right: 16px; bottom: 8px; font: 700 11px/16px "Liberation Sans", Arial, sans-serif; }
    .hud { position: absolute; left: 1331px; top: 350px; width: 138px; height: 22px; display: flex; align-items: center; background: #f1f1f1; font-size: 11px; }
    .hud .grip { width: 9px; height: 18px; margin-right: 5px; border-right: 1px solid #d8d8d8; background: repeating-linear-gradient(#ccc 0 1px, transparent 1px 3px) 4px 0 / 3px 100% no-repeat; }
    .hud input { width: 69px; height: 20px; border: 1px solid #c4c4c4; background: #fff; text-align: center; padding: 0; }
    .hud .d { width: 26px; height: 22px; }
    .tip { position: absolute; left: 2016px; top: 318px; height: 18px; padding: 0 3px; background: #f1f1f1; border-bottom: 1px solid #777; color: #111; font: 12px/17px "Open Sans", sans-serif; }
    .cube { position: absolute; right: 0; top: 2px; }
    .cube text { font-family: "Open Sans", sans-serif; }
    .cube .face { font-size: 30px; font-weight: 700; fill: #8f9296; }
    .cube .ax { font: 700 40px "Liberation Sans", Arial, sans-serif; }
  `];
  render() {
    return html`
      <app-header></app-header>
      <app-ribbon></app-ribbon>
      <main class="stage">
        <app-scene></app-scene>
        <svg class="cube" width="100" height="120" viewBox="540 450 300 360">
          <defs>
            <linearGradient id="cf" x2="0" y2="1"><stop offset="0" stop-color="#ededed"/><stop offset="1" stop-color="#d9d9d9"/></linearGradient>
            <filter id="sh" x="-30%" y="-30%" width="160%" height="160%"><feGaussianBlur stdDeviation="12"/></filter>
          </defs>
          <path d="M575 620L740 630L725 750L585 750Z" fill="#000" opacity=".35" filter="url(#sh)"/>
          <path d="M578 535H719L731 632L722 734H580L568 632Z" fill="url(#cf)"/>
          <path d="M601 612H702V654H601Z" fill="#e2e4ea"/>
          <path d="M578 535H719L731 632L722 734H580L568 632ZM568 632H738" fill="none" stroke="#888" stroke-width="3" stroke-dasharray="28 12"/>
          <path d="M574 515L579 535" stroke="#5ef05e" stroke-width="5"/><path d="M578 728V758" stroke="#7d7df5" stroke-width="4"/>
          <text class="face" x="650" y="591" text-anchor="middle">TOP</text>
          <text class="face" x="652" y="697" text-anchor="middle">FRONT</text>
          <text class="ax" x="573" y="509" text-anchor="middle" fill="#8af58a">Y</text>
          <text class="ax" x="748" y="651" text-anchor="middle" fill="#f98a8a">X</text>
          <text class="ax" x="574" y="788" text-anchor="middle" fill="#8080f5">Z</text>
        </svg>
        <app-browser></app-browser>
        <app-dialog></app-dialog>
        <div class="hud"><span class="grip"></span><input type="text" aria-label="Distance" .value=${"0.30 in"}><button class="d" aria-label="More">${icon("more")}</button><button class="d" aria-label="Set Pivot">${icon("pivot")}</button></div>
        <div class="tip" role="tooltip">Select bodies to move</div>
        <div class="comments"><span>COMMENTS</span><button aria-label="Expand comments">${icon("plusDot")}</button></div>
        <div class="nav">${NAV.map(([n, c]) => html`<button aria-label=${n}>${icon(n)}${c ? icon("caret") : nothing}</button>`)}</div>
        <div class="count">4 Bodies</div>
      </main>
      <app-timeline></app-timeline>`;
  }
}
